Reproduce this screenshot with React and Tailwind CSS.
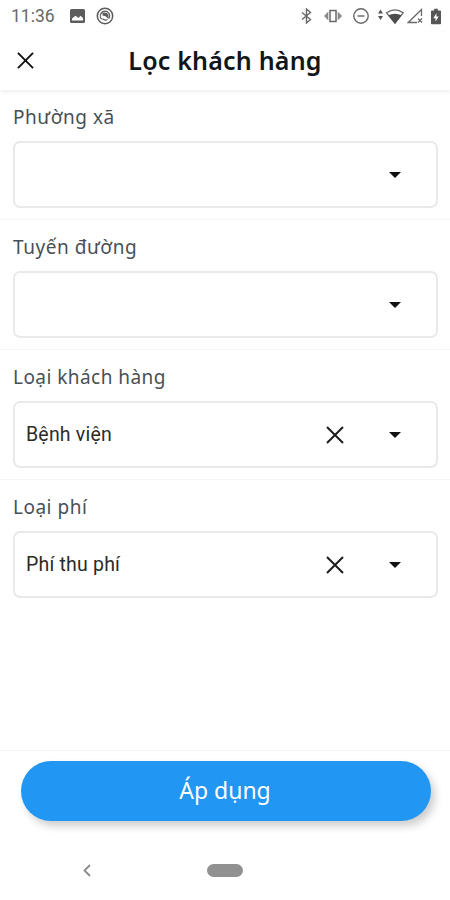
import clsx from 'clsx';

const filters = [
  { label: 'Phường xã', value: '', labelClass: 'tracking-[0.55px]' },
  { label: 'Tuyến đường', value: '', labelClass: 'tracking-[0.55px]' },
  { label: 'Loại khách hàng', value: 'Bệnh viện', labelClass: 'tracking-[0.45px]' },
  { label: 'Loại phí', value: 'Phí thu phí', labelClass: 'tracking-[0.5px]' },
];

function CloseIcon({ className }) {
  return (
    <svg className={className} viewBox="0 0 18 18" fill="none" stroke="currentColor" strokeWidth="2">
      <path d="M1 1 17 17M17 1 1 17" />
    </svg>
  );
}

function StatusBar() {
  return (
    <div className="flex h-8 shrink-0 items-center justify-between pl-[11px] pr-[9px] text-[#686868]">
      <div className="flex items-center">
        <span className="w-[59px] pt-px font-['Roboto',sans-serif] text-[17.5px] leading-none">11:36</span>
        <svg className="h-[14px] w-[15px]" viewBox="0 0 15 14">
          <path fill="#5c5c5c" fillRule="evenodd" d="M1.5 0h12A1.5 1.5 0 0 1 15 1.5v11a1.5 1.5 0 0 1-1.5 1.5h-12A1.5 1.5 0 0 1 0 12.5V1.5A1.5 1.5 0 0 1 1.5 0ZM2 11.5h11V9L10.5 6.7 8.5 9 5.5 6.7 2 9.5Z" />
        </svg>
        <svg className="ml-[11px] size-[18px]" viewBox="0 0 18 18" fill="none" stroke="#5c5c5c">
          <circle cx="9" cy="9" r="7.7" strokeWidth="1.5" />
          <path strokeWidth="1.3" d="M5.6 12.2A4.7 4.7 0 1 1 12.8 11.7M6.5 11.8Q9 14 11.5 12.5" />
          <path fill="#5c5c5c" stroke="none" d="M6.5 5.8Q10 4.5 12.5 7.5V12L9.5 9.3 6.5 8.5Z" />
        </svg>
      </div>
      <div className="flex items-center">
        <svg className="h-[16px] w-[11px]" viewBox="0 0 11 16" fill="none" stroke="currentColor" strokeWidth="1.4">
          <path d="M1 4.5 9.5 11.5 5.5 15V1L9.5 4.5 1 11.5" />
        </svg>
        <svg className="ml-[12px] h-[14px] w-[18px]" viewBox="0 0 18 14">
          <path fill="none" stroke="currentColor" strokeWidth="1.5" d="M6 1.5h6v11H6Z" />
          <path fill="#8a8a8a" d="M4.3 2.5v9L0 7ZM13.7 2.5v9L18 7Z" />
        </svg>
        <svg className="ml-[11px] size-[16px]" viewBox="0 0 16 16" fill="none" stroke="currentColor" strokeWidth="1.4">
          <circle cx="8" cy="8" r="7.2" />
          <path d="M4.5 8h7" />
        </svg>
        <svg className="ml-[9px] h-[17px] w-[26px]" viewBox="0 0 26 17">
          <path fill="#555" d="m0 5.5 2.5-4L5 5.5ZM0 8h5l-2.5 4Z" />
          <path fill="none" stroke="#686868" strokeWidth="1.3" d="M8.6 4.8Q17 -1 25.2 4.8L17 15.2Z" />
          <path fill="#4c4c4c" d="M10.2 7.2Q17 4.2 23.6 7.2L17 15.8Z" />
        </svg>
        <svg className="ml-[3px] h-[16px] w-[17px]" viewBox="0 0 17 16" fill="none" stroke="currentColor" strokeWidth="1.3">
          <path d="M14.5 8V1.5L1.3 14.5H10M11 10.5l4 4M15 10.5l-4 4" />
        </svg>
        <svg className="ml-[7px] h-[17px] w-[10px]" viewBox="0 0 11 17">
          <path fill="#565656" fillRule="evenodd" d="M3.5 0h4v2H10a1 1 0 0 1 1 1v13a1 1 0 0 1-1 1H1a1 1 0 0 1-1-1V3a1 1 0 0 1 1-1h2.5ZM6 5 2.5 10.5H5V14l3.5-5.5H6Z" />
        </svg>
      </div>
    </div>
  );
}

function FilterField({ label, value, labelClass, last }) {
  return (
    <section className={clsx('h-[130px] px-[13px] pt-[13px]', !last && 'border-b border-[#f5f5f5]')}>
      <div className={clsx('h-7 text-[19px] leading-7 text-[#485055]', labelClass)}>{label}</div>
      <div className="mt-[10px] flex h-[67px] w-[425px] items-center rounded-[7px] border-2 border-[#e9e9e9] pl-[11px] pr-[35px]">
        <span className="flex-1 font-['Roboto',sans-serif] text-[19.5px] tracking-[0.2px] text-[#2b2b2b]">{value}</span>
        {value && <CloseIcon className="mr-[45px] size-[18px] text-[#1d1d1d]" />}
        <svg className="h-[6px] w-[12px]" viewBox="0 0 12 6">
          <path fill="#111" d="M0 0h12L6 6Z" />
        </svg>
      </div>
    </section>
  );
}

export default function App() {
  return (
    <div className="flex h-[900px] w-[450px] flex-col overflow-hidden bg-white font-['Noto_Sans',sans-serif]">
      <StatusBar />
      <header className="grid h-[58px] shrink-0 grid-cols-[50px_1fr_50px] items-center pb-[2px] shadow-[0_2px_4px_rgba(0,0,0,0.07)]">
        <CloseIcon className="ml-[17px] size-[17px] text-[#111]" />
        <h1 className="text-center text-[25px] font-semibold leading-none tracking-[0.2px] text-[#10161a]">Lọc khách hàng</h1>
      </header>
      <main className="flex-1">
        {filters.map((filter, i) => (
          <FilterField key={filter.label} {...filter} last={i === filters.length - 1} />
        ))}
      </main>
      <footer className="h-[90px] shrink-0 border-t border-[#f4f4f4] pl-[21px] pt-[9.5px]">
        <button className="block h-[60px] w-[410px] rounded-full bg-[#2196f3] pr-[2px] text-[23px] leading-none text-white shadow-[4px_5px_8px_rgba(0,0,0,0.2)]">
          Áp dụng
        </button>
      </footer>
      <nav className="grid h-[60px] shrink-0 grid-cols-[175px_100px_175px] justify-items-center">
        <svg className="mr-[2px] mt-[24px] h-[13px] w-[8px]" viewBox="0 0 8 13" fill="none" stroke="#8b8b8b" strokeWidth="1.8">
          <path d="M7 1 1.5 6.5 7 12" />
        </svg>
        <div className="mt-[24px] h-[13px] w-[36px] rounded-full bg-[#919191]" />
      </nav>
    </div>
  );
}
